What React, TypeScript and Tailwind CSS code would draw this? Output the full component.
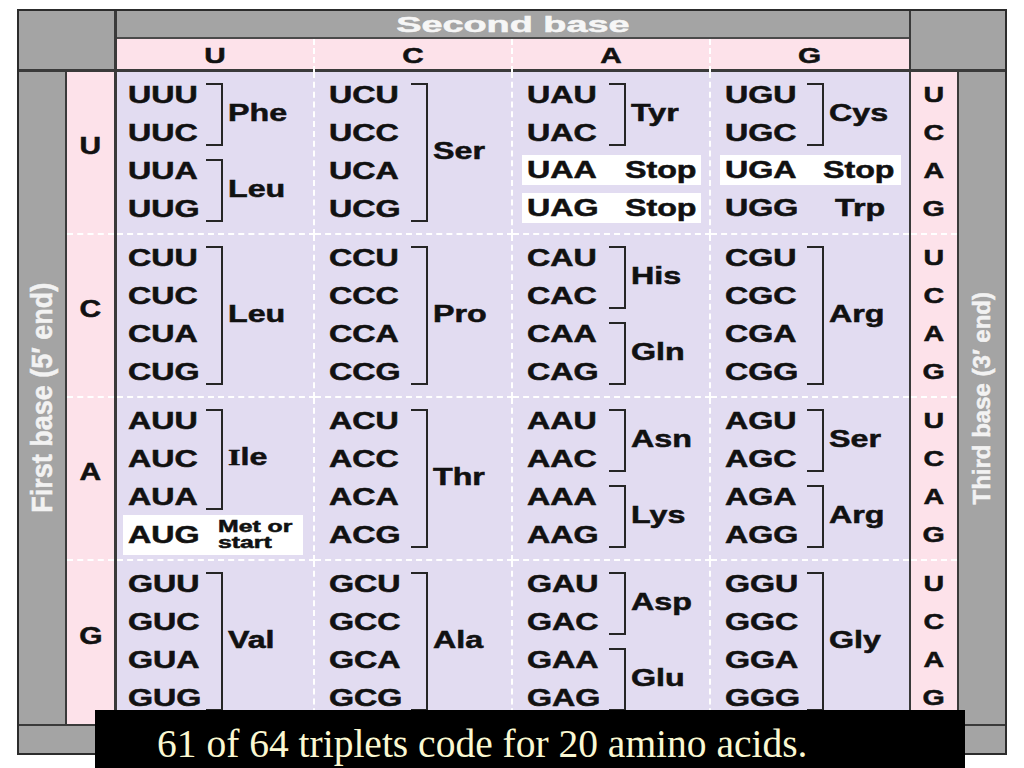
import type { ReactNode } from 'react';

type Item =
  | { t: 'g'; codons: string[]; aa: ReactNode }
  | { t: 's'; codon: string; aa: string; box?: boolean; gap: string }
  | { t: 'start' };

const BASES = ['U', 'C', 'A', 'G'];

// table[firstBase][secondBase]
const TABLE: Item[][][] = [
  [
    [
      { t: 'g', codons: ['UUU', 'UUC'], aa: 'Phe' },
      { t: 'g', codons: ['UUA', 'UUG'], aa: 'Leu' },
    ],
    [{ t: 'g', codons: ['UCU', 'UCC', 'UCA', 'UCG'], aa: 'Ser' }],
    [
      { t: 'g', codons: ['UAU', 'UAC'], aa: 'Tyr' },
      { t: 's', codon: 'UAA', aa: 'Stop', box: true, gap: 'ml-[16px]' },
      { t: 's', codon: 'UAG', aa: 'Stop', box: true, gap: 'ml-[16px]' },
    ],
    [
      { t: 'g', codons: ['UGU', 'UGC'], aa: 'Cys' },
      { t: 's', codon: 'UGA', aa: 'Stop', box: true, gap: 'ml-[16px]' },
      { t: 's', codon: 'UGG', aa: 'Trp', gap: 'ml-[28px]' },
    ],
  ],
  [
    [{ t: 'g', codons: ['CUU', 'CUC', 'CUA', 'CUG'], aa: 'Leu' }],
    [{ t: 'g', codons: ['CCU', 'CCC', 'CCA', 'CCG'], aa: 'Pro' }],
    [
      { t: 'g', codons: ['CAU', 'CAC'], aa: 'His' },
      { t: 'g', codons: ['CAA', 'CAG'], aa: 'Gln' },
    ],
    [{ t: 'g', codons: ['CGU', 'CGC', 'CGA', 'CGG'], aa: 'Arg' }],
  ],
  [
    [
      {
        t: 'g',
        codons: ['AUU', 'AUC', 'AUA'],
        aa: (
          <>
            <span className="font-['Liberation_Serif',serif]">I</span>le
          </>
        ),
      },
      { t: 'start' },
    ],
    [{ t: 'g', codons: ['ACU', 'ACC', 'ACA', 'ACG'], aa: 'Thr' }],
    [
      { t: 'g', codons: ['AAU', 'AAC'], aa: 'Asn' },
      { t: 'g', codons: ['AAA', 'AAG'], aa: 'Lys' },
    ],
    [
      { t: 'g', codons: ['AGU', 'AGC'], aa: 'Ser' },
      { t: 'g', codons: ['AGA', 'AGG'], aa: 'Arg' },
    ],
  ],
  [
    [{ t: 'g', codons: ['GUU', 'GUC', 'GUA', 'GUG'], aa: 'Val' }],
    [{ t: 'g', codons: ['GCU', 'GCC', 'GCA', 'GCG'], aa: 'Ala' }],
    [
      { t: 'g', codons: ['GAU', 'GAC'], aa: 'Asp' },
      { t: 'g', codons: ['GAA', 'GAG'], aa: 'Glu' },
    ],
    [{ t: 'g', codons: ['GGU', 'GGC', 'GGA', 'GGG'], aa: 'Gly' }],
  ],
];

function Wide({ children }: { children: ReactNode }) {
  return <span className="inline-block origin-left scale-x-[1.4] whitespace-nowrap">{children}</span>;
}

function CellItem({ item, first }: { item: Item; first: boolean }) {
  const slot = first ? 'w-[78px]' : 'w-[82px]';

  if (item.t === 'g') {
    return (
      <div className="flex">
        <div className={`flex flex-col ${slot}`}>
          {item.codons.map((c) => (
            <div key={c} className="h-[38px] leading-[38px]">
              <Wide>{c}</Wide>
            </div>
          ))}
        </div>
        <div className="w-[17px] mt-[7px] mb-[6px] border-y-2 border-r-2 border-[#262626]" />
        <div className="flex items-center pl-[5px] pb-[2px]">
          <Wide>{item.aa}</Wide>
        </div>
      </div>
    );
  }

  if (item.t === 's') {
    return (
      <div className="h-[38px] pt-[3px] pb-[5px] -ml-[5px] mr-[8px]">
        <div className={`flex items-center h-full pl-[5px] ${item.box ? 'bg-white' : ''}`}>
          <div className={slot}>
            <Wide>{item.codon}</Wide>
          </div>
          <div className={item.gap}>
            <Wide>{item.aa}</Wide>
          </div>
        </div>
      </div>
    );
  }

  // AUG start box
  return (
    <div className="-mt-[1px] h-[40px] -ml-[5px] mr-[10px] flex items-center pl-[5px] bg-white">
      <div className="w-[78px]">
        <Wide>AUG</Wide>
      </div>
      <div className="ml-[12px] text-[16px] leading-[16px]">
        <div>
          <span className="inline-block origin-left scale-x-[1.55] whitespace-nowrap">Met or</span>
        </div>
        <div>
          <span className="inline-block origin-left scale-x-[1.55] whitespace-nowrap">start</span>
        </div>
      </div>
    </div>
  );
}

export default function App() {
  return (
    <div className="relative w-[1024px] h-[768px] overflow-hidden bg-white pl-[17px] pt-[9px] font-['Liberation_Sans',Arial,sans-serif] font-bold text-[#111]">
      <div className="flex flex-col w-[990px] h-[746px] border-2 border-[#2c2c2c] bg-[#a4a4a4] [-webkit-text-stroke:0.5px_currentColor]">
        {/* header */}
        <div className="flex h-[61px]">
          <div className="w-[98px] border-r-[3px] border-b-[3px] border-[#3a3a3a]" />
          <div className="flex flex-col w-[792px]">
            <div className="h-[28px] flex items-center justify-center border-b-2 border-[#4a4a4a] text-[22px] text-[#f6f6f6]">
              <span className="inline-block scale-x-[1.72]">Second base</span>
            </div>
            <div className="h-[33px] grid grid-cols-4 bg-[#fde2ea] border-b-[3px] border-[#3a3a3a]">
              {BASES.map((b, i) => (
                <div
                  key={b}
                  className={`flex items-center justify-center text-[22px] ${i < 3 ? 'border-r-2 border-dashed border-white' : ''}`}
                >
                  <span className="inline-block scale-x-[1.35]">{b}</span>
                </div>
              ))}
            </div>
          </div>
          <div className="w-[96px] border-l-2 border-b-[3px] border-[#3a3a3a]" />
        </div>

        {/* body */}
        <div className="flex h-[652px]">
          <div className="w-[48px] border-r-2 border-[#3a3a3a] flex items-center justify-center">
            <span className="[writing-mode:vertical-rl] rotate-180 scale-y-[0.9] text-[30px] leading-none whitespace-nowrap text-[#f2f2f2]">
              First base (5′ end)
            </span>
          </div>
          <div className="w-[50px] border-r-[3px] border-[#3a3a3a] bg-[#fde2ea] flex flex-col">
            {BASES.map((b, i) => (
              <div
                key={b}
                className={`h-[163px] flex items-center justify-center pb-[12px] text-[23px] ${i < 3 ? 'border-b-2 border-dashed border-white' : ''}`}
              >
                <span className="inline-block scale-x-[1.3]">{b}</span>
              </div>
            ))}
          </div>

          <div className="grid grid-cols-4 grid-rows-4 w-[792px] h-[652px] bg-[#e2dcf1] text-[23px]">
            {TABLE.map((row, r) =>
              row.map((cell, c) => (
                <div
                  key={`${r}-${c}`}
                  className={`flex flex-col pt-[4px] border-dashed border-white ${c === 0 ? 'pl-[11px]' : 'pl-[14px]'} ${c < 3 ? 'border-r-2' : ''} ${r < 3 ? 'border-b-2' : ''}`}
                >
                  {cell.map((item, k) => (
                    <CellItem key={k} item={item} first={c === 0} />
                  ))}
                </div>
              ))
            )}
          </div>

          <div className="w-[50px] border-x-2 border-[#3a3a3a] bg-[#fde2ea] flex flex-col">
            {BASES.map((b, i) => (
              <div
                key={b}
                className={`h-[163px] flex flex-col items-center pt-[4px] text-[22px] ${i < 3 ? 'border-b-2 border-dashed border-white' : ''}`}
              >
                {BASES.map((t) => (
                  <div key={t} className="h-[38px] leading-[38px]">
                    <span className="inline-block scale-x-[1.3]">{t}</span>
                  </div>
                ))}
              </div>
            ))}
          </div>
          <div className="w-[46px] flex items-center justify-center">
            <span className="[writing-mode:vertical-rl] rotate-180 text-[24px] leading-none whitespace-nowrap text-[#f2f2f2]">
              Third base (3′ end)
            </span>
          </div>
        </div>

        <div className="h-[29px] border-t-2 border-[#3a3a3a]" />
      </div>

      <div className="absolute left-[95px] top-[710px] w-[870px] h-[58px] bg-black pl-[62px] pt-[10px] font-['Liberation_Serif',serif] font-normal text-[39.5px] leading-[48px] text-[#fbf8d2] whitespace-nowrap">
        61 of 64 triplets code for 20 amino acids.
      </div>
    </div>
  );
}
